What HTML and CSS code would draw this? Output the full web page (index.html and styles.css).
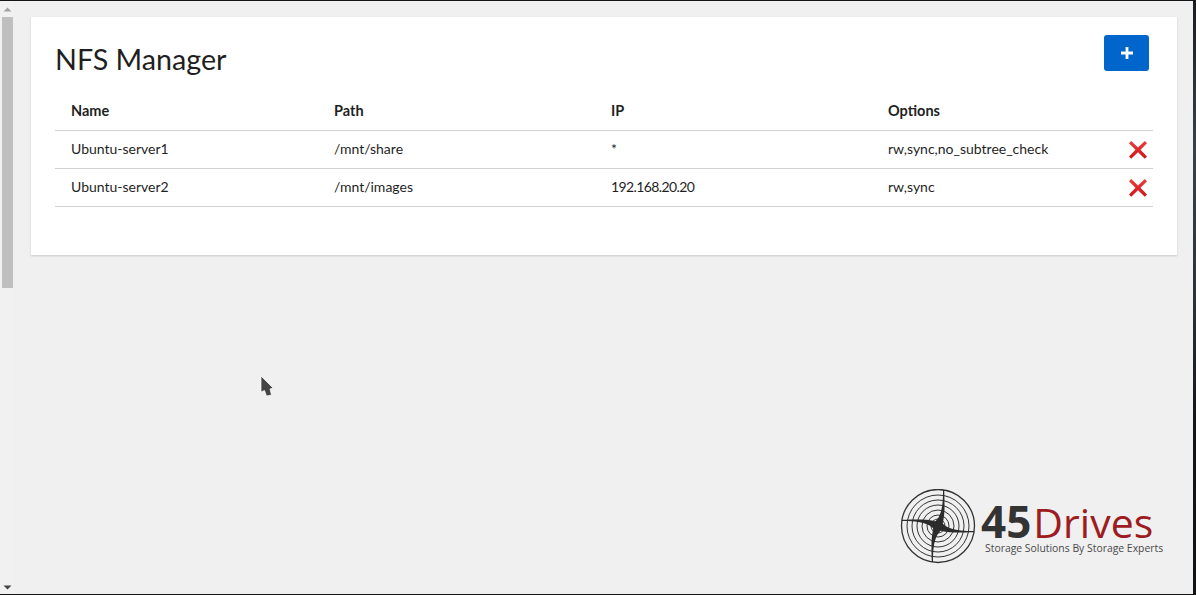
FILE: index.html
```html
<!DOCTYPE html>
<html lang="en">
<head>
<meta charset="utf-8">
<title>NFS Manager</title>
<link rel="stylesheet" href="styles.css">
</head>
<body>
<div class="window">
  <div class="scrollbar">
    <svg class="arrow" width="14" height="16" viewBox="0 0 14 16"><path d="M3.500 10.500L7.500 6.500L11.500 10.500Z" fill="#a3a3a3"/></svg>
    <div class="thumb"></div>
    <svg class="arrow arrow-down" width="14" height="12" viewBox="0 0 14 12"><path d="M3.500 3.500H11.500L7.500 7.500Z" fill="#444"/></svg>
  </div>
  <main class="content">
    <section class="card">
      <header class="card-head">
        <h1 class="title">NFS Manager</h1>
        <button class="add" type="button" aria-label="Add">
          <svg width="12" height="12" viewBox="0 0 12 12"><path d="M4.600 0H7.400V4.600H12V7.400H7.400V12H4.600V7.400H0V4.600H4.600Z" fill="#fff"/></svg>
        </button>
      </header>
      <table class="table">
        <thead>
          <tr><th class="c1">Name</th><th class="c2">Path</th><th class="c3">IP</th><th class="c4">Options</th><th class="c5"></th></tr>
        </thead>
        <tbody>
          <tr>
            <td>Ubuntu-server1</td><td>/mnt/share</td><td>*</td><td>rw,sync,no_subtree_check</td>
            <td class="del"><svg width="18" height="18" viewBox="0 0 18 18"><defs><linearGradient id="xred" x1="0" y1="0" x2="0" y2="1"><stop offset="0" stop-color="#ef3b3b"/><stop offset="1" stop-color="#d01318"/></linearGradient></defs><path d="M2.200 0L9 6.500L15.800 0L18 2.200L11.500 8.800L18 15.500L15.800 17.800L9 11.200L2.200 17.800L0 15.500L6.500 8.800L0 2.200Z" fill="url(#xred)"/></svg></td>
          </tr>
          <tr>
            <td>Ubuntu-server2</td><td>/mnt/images</td><td class="ip">192.168.20.20</td><td>rw,sync</td>
            <td class="del"><svg width="18" height="18" viewBox="0 0 18 18"><path d="M2.200 0L9 6.500L15.800 0L18 2.200L11.500 8.800L18 15.500L15.800 17.800L9 11.200L2.200 17.800L0 15.500L6.500 8.800L0 2.200Z" fill="url(#xred)"/></svg></td>
          </tr>
        </tbody>
      </table>
    </section>
    <footer class="brand">
      <svg class="brand-mark" width="76" height="76" viewBox="0 0 76 76" fill="none" stroke="#333">
        <circle cx="38" cy="37" r="36.500" stroke-width="1.300"/>
        <circle cx="38" cy="37" r="31" stroke-width="1"/>
        <circle cx="38" cy="37" r="26" stroke-width="1"/>
        <circle cx="38" cy="37" r="21" stroke-width="1"/>
        <circle cx="38" cy="37" r="16" stroke-width="1"/>
        <circle cx="38" cy="37" r="11" stroke-width="1"/>
        <circle cx="38" cy="37" r="7" stroke-width="1"/>
        <g fill="#2b2b2b" stroke="none">
          <path d="M30 35C36 34 41 28 42.500 14C43 10 43 5 43 .8L44.200 .8C44.400 8 44.600 14 44.500 20C44.300 28 43 34 41 41Z"/>
          <path d="M30 35C36 34 41 28 42.500 14C43 10 43 5 43 .8L44.200 .8C44.400 8 44.600 14 44.500 20C44.300 28 43 34 41 41Z" transform="rotate(90 38 37)"/>
          <path d="M30 35C36 34 41 28 42.500 14C43 10 43 5 43 .8L44.200 .8C44.400 8 44.600 14 44.500 20C44.300 28 43 34 41 41Z" transform="rotate(180 38 37)"/>
          <path d="M30 35C36 34 41 28 42.500 14C43 10 43 5 43 .8L44.200 .8C44.400 8 44.600 14 44.500 20C44.300 28 43 34 41 41Z" transform="rotate(270 38 37)"/>
        </g>
      </svg>
      <div class="brand-text">
        <div class="brand-name"><span class="brand-num">45</span><span class="brand-word">Drives</span></div>
        <div class="brand-tag">Storage Solutions By Storage Experts</div>
      </div>
    </footer>
  </main>
  <div class="edge"></div>
</div>
<svg class="cursor" width="14" height="22" viewBox="0 0 14 22"><path d="M1 1V17L4.500 15.500L6.500 21L11.500 20L10 14L13 13Z" fill="#444" stroke="#fff" stroke-width=".7"/></svg>
</body>
</html>
```

FILE: styles.css
```css
html, body {
  margin: 0;
  height: 100%;
  overflow: hidden;
}

body {
  background: #f0f0f0;
  font-family: "Lato", "Liberation Sans", sans-serif;
  color: #151515;
}

.window {
  display: flex;
  height: 595px;
  box-sizing: border-box;
  border-top: 1px solid #151515;
  border-bottom: 1px solid #151515;
}

.scrollbar {
  width: 14px;
  flex: none;
  background: #f1f1f1;
  display: flex;
  flex-direction: column;
  align-items: center;
}

.arrow {
  flex: none;
  display: block;
}

.arrow-down {
  margin-top: auto;
}

.thumb {
  width: 11px;
  height: 271px;
  margin-left: 1px;
  background: #bfbfbf;
}

.content {
  flex: 1;
  min-width: 0;
  padding: 16px 16px 29px 17px;
  display: flex;
  flex-direction: column;
}

.card {
  background: #fff;
  box-shadow: 0 1px 2px rgba(0, 0, 0, .16);
  padding: 18px 24px 48px 24px;
}

.card-head {
  display: flex;
  justify-content: space-between;
  align-items: flex-start;
  padding-right: 4px;
}

.title {
  margin: 7px 0 0;
  font-size: 28.700px;
  line-height: 34px;
  font-weight: 400;
  color: #1f1f1f;
}

.add {
  width: 45px;
  height: 36px;
  padding: 0;
  border: 0;
  border-radius: 3px;
  background: #06c;
  display: flex;
  align-items: center;
  justify-content: center;
}

.table {
  width: 100%;
  margin-top: 15px;
  border-collapse: collapse;
  table-layout: fixed;
  font-size: 14px;
  color: #1f1f1f;
}

.table th {
  box-sizing: border-box;
  height: 39px;
  padding: 0 0 0 16px;
  text-align: left;
  font-size: 14.500px;
  font-weight: 700;
  border-bottom: 1px solid #d2d2d2;
}

.table td {
  box-sizing: border-box;
  height: 38px;
  padding: 0 0 2px 16px;
  border-bottom: 1px solid #d2d2d2;
}

.table td.ip {
  letter-spacing: -.6px;
}

.c1 {
  width: 263px;
}

.c2, .c3 {
  width: 277px;
}

.c4 {
  width: 225px;
}

.table td.del {
  padding: 0 6px 0 0;
  text-align: right;
  vertical-align: middle;
}

.del svg {
  display: inline-block;
  vertical-align: middle;
}

.brand {
  margin-top: auto;
  display: flex;
  align-items: center;
  align-self: flex-end;
  margin-right: 13px;
  gap: 4px;
}

.brand-mark {
  flex: none;
}

.brand-text {
  width: 184px;
  margin-top: 1px;
}

.brand-name {
  font-family: "Open Sans", "Noto Sans", sans-serif;
  font-size: 41px;
  line-height: 42px;
}

.brand-num {
  margin-left: 1px;
  font-size: 44px;
  color: #333;
  font-weight: 700;
}

.brand-word {
  color: #9c1c22;
  margin-left: 2px;
}

.brand-tag {
  margin: -1px 0 0 5px;
  font-family: "Open Sans", "Noto Sans", sans-serif;
  font-size: 10.400px;
  line-height: 13px;
  white-space: nowrap;
  color: #4a4a4a;
}

.edge {
  width: 3px;
  flex: none;
  background: linear-gradient(#1a1d20 0, #39424a 25%, #2b3238 50%, #14171a 70%, #101214 100%);
}

.cursor {
  position: absolute;
  left: 260px;
  top: 375px;
}
```
